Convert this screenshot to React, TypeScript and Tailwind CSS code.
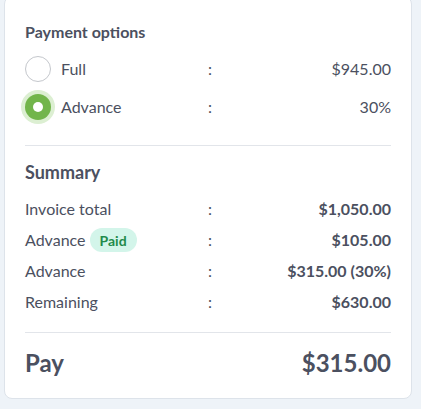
import { useState } from "react";

type Option = "full" | "advance";

const SUMMARY: Array<{ label: string; value: string; paid?: boolean }> = [
  { label: "Invoice total", value: "$1,050.00" },
  { label: "Advance", value: "$105.00", paid: true },
  { label: "Advance", value: "$315.00 (30%)" },
  { label: "Remaining", value: "$630.00" },
];

function Radio({ checked }: { checked: boolean }) {
  if (checked) {
    return (
      <span className="flex h-[26px] w-[26px] shrink-0 items-center justify-center rounded-full bg-[#72b54b] ring-4 ring-[#dcefd2]">
        <span className="h-[10px] w-[10px] rounded-full bg-white" />
      </span>
    );
  }
  return <span className="h-[26px] w-[26px] shrink-0 rounded-full border border-[#c4c7cc] bg-white" />;
}

export default function App() {
  const [option, setOption] = useState<Option>("advance");

  const row = "grid grid-cols-[1fr_auto_1fr] items-center";

  return (
    <div
      className="min-h-[409px] bg-[#eef3f8] pl-[4px] pr-[9px] pb-[10px] text-[#4b5060]"
      style={{ fontFamily: "Lato, 'Noto Sans', sans-serif" }}
    >
      <div className="-mt-[4px] rounded-lg border border-[#dde3ea] bg-white px-5 pt-[24px] pb-[19px]">
        <h3 className="text-[16px] font-bold leading-[22px]">Payment options</h3>
        <div className="mt-[13px] flex flex-col gap-[12px]">
          {(
            [
              { key: "full", label: "Full", value: "$945.00" },
              { key: "advance", label: "Advance", value: "30%" },
            ] as const
          ).map((o) => (
            <button
              key={o.key}
              type="button"
              onClick={() => setOption(o.key)}
              className={`${row} h-[26px] text-left text-[16px]`}
            >
              <span className="flex items-center gap-[10px]">
                <Radio checked={option === o.key} />
                {o.label}
              </span>
              <span className="pl-[6px] pr-[2px]">:</span>
              <span className="text-right">{o.value}</span>
            </button>
          ))}
        </div>

        <div className="mt-[25px] border-t border-[#e2e5ea]" />

        <h3 className="mt-[14px] text-[18px] font-bold leading-[24px]">Summary</h3>
        <div className="mt-[13px] flex flex-col gap-[9px]">
          {SUMMARY.map((s, i) => (
            <div key={i} className={`${row} h-[22px] text-[16px]`}>
              <span className="flex items-center gap-[4px]">
                {s.label}
                {s.paid && (
                  <span className="flex h-[24px] items-center rounded-full bg-[#d3f5ea] px-[10px] text-[14px] font-bold text-[#228a4a]">
                    Paid
                  </span>
                )}
              </span>
              <span className="pl-[6px] pr-[2px]">:</span>
              <span className="text-right font-bold">{s.value}</span>
            </div>
          ))}
        </div>

        <div className="mt-[20px] border-t border-[#e2e5ea]" />

        <div className="mt-[14px] flex items-center justify-between text-[24px] font-bold leading-[32px]">
          <span>Pay</span>
          <span>$315.00</span>
        </div>
      </div>
    </div>
  );
}
